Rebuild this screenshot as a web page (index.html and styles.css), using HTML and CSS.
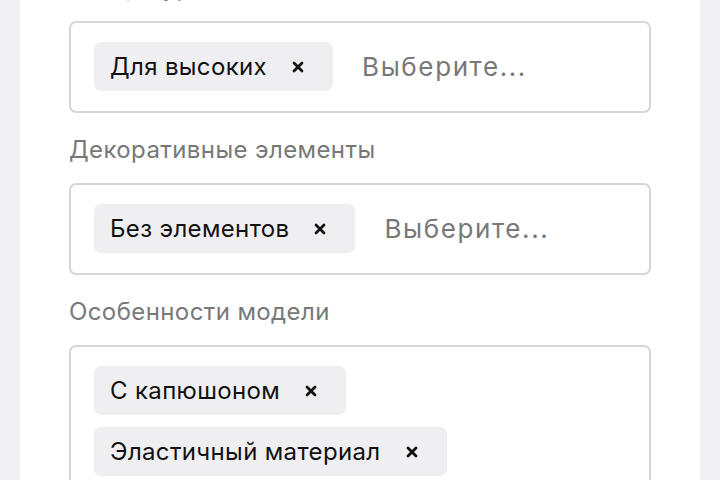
FILE: index.html
```html
<!DOCTYPE html>
<html lang="ru">
<head>
<meta charset="utf-8">
<link rel="stylesheet" href="styles.css">
</head>
<body>
<div class="panel">
  <div class="field first">
    <label class="label">Тип фигуры</label>
    <div class="select">
      <span class="chip"><span class="chip-text">Для высоких</span><span class="chip-x"><svg viewBox="0 0 12 12" width="12" height="12"><path d="M2 2L10 10M10 2L2 10" stroke="#111" stroke-width="2.8" stroke-linecap="round"/></svg></span></span>
      <span class="placeholder">Выберите...</span>
    </div>
  </div>
  <div class="field">
    <label class="label">Декоративные элементы</label>
    <div class="select">
      <span class="chip"><span class="chip-text">Без элементов</span><span class="chip-x"><svg viewBox="0 0 12 12" width="12" height="12"><path d="M2 2L10 10M10 2L2 10" stroke="#111" stroke-width="2.8" stroke-linecap="round"/></svg></span></span>
      <span class="placeholder">Выберите...</span>
    </div>
  </div>
  <div class="field">
    <label class="label">Особенности модели</label>
    <div class="select">
      <span class="chip"><span class="chip-text">С капюшоном</span><span class="chip-x"><svg viewBox="0 0 12 12" width="12" height="12"><path d="M2 2L10 10M10 2L2 10" stroke="#111" stroke-width="2.8" stroke-linecap="round"/></svg></span></span>
      <span class="chip"><span class="chip-text">Эластичный материал</span><span class="chip-x"><svg viewBox="0 0 12 12" width="12" height="12"><path d="M2 2L10 10M10 2L2 10" stroke="#111" stroke-width="2.8" stroke-linecap="round"/></svg></span></span>
      <span class="placeholder">Выберите...</span>
    </div>
  </div>
</div>
</body>
</html>
```

FILE: styles.css
```css
html, body {
  margin: 0;
  padding: 0;
  height: 480px;
  overflow: hidden;
  background: #f0f0f2;
  font-family: Inter, "Noto Sans", sans-serif;
}

.panel {
  display: flow-root;
  margin: 0 20px;
  background: #ffffff;
  padding: 0 49px;
  height: 600px;
}

.field {
  margin-top: 22px;
}

.field.first {
  margin-top: -27px;
}

.label {
  display: block;
  font-size: 24px;
  line-height: 30px;
  letter-spacing: 0.4px;
  color: #787878;
  margin-bottom: 18px;
}

.select {
  border: 2px solid #d6d6d6;
  border-radius: 7px;
  padding: 19px 23px 20px;
  display: flex;
  flex-wrap: wrap;
  align-items: center;
  gap: 12px;
}

.chip {
  display: flex;
  align-items: center;
  height: 49px;
  padding: 0 28px 0 16px;
  background: #efeff1;
  border-radius: 7px;
  box-sizing: border-box;
}

.chip-text {
  font-size: 24px;
  letter-spacing: 0.35px;
  color: #111;
  margin-right: 24px;
}

.chip-x {
  display: flex;
  width: 14px;
  height: 14px;
  align-items: center;
  justify-content: center;
}

.placeholder {
  font-size: 26px;
  letter-spacing: 1.6px;
  color: #787878;
  padding-left: 17px;
}
```
